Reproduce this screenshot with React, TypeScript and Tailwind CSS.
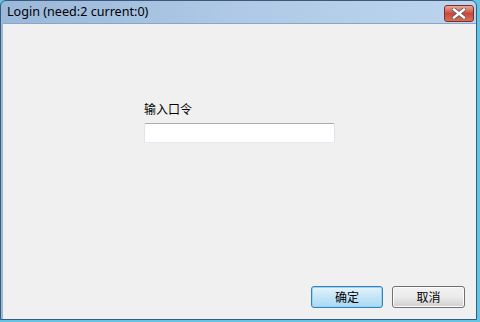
export default function App() {
  return (
    <div className="w-[480px] h-[322px] bg-[#5fc6e6] relative overflow-hidden" style={{ fontFamily: '"Noto Sans", "Noto Sans CJK SC", sans-serif' }}>
      <div className="absolute left-0 top-0 w-[477px] h-[320px] border border-[#3b5a7a] rounded-tl-[6px] rounded-tr-[6px] flex flex-col bg-gradient-to-r from-[#9ab8da] via-[#afc9e6] to-[#bcd4ee]">
        <div className="h-[22px] flex items-center justify-between pl-[6px] pr-[2px] shrink-0">
          <span className="text-[12.6px] text-black leading-none mt-[1px]">Login (need:2 current:0)</span>
          <div className="w-[30px] h-[17px] mt-[3px] rounded-[3px] border border-[#7a3028] bg-gradient-to-b from-[#e7a99a] via-[#c9473b] to-[#d86e55] flex items-center justify-center">
            <svg width="14" height="11" viewBox="0 0 14 11">
              <path d="M2 1.5 L12 9.5 M12 1.5 L2 9.5" stroke="#555" strokeWidth="4" strokeLinecap="square" />
              <path d="M2 1.5 L12 9.5 M12 1.5 L2 9.5" stroke="#fff" strokeWidth="2.4" strokeLinecap="square" />
            </svg>
          </div>
        </div>
        <div className="flex-1 ml-[2px] border-t border-[#8aa6c4] bg-[#f0f0f0] flex flex-col">
          <div className="flex-1 flex flex-col pl-[141px] pt-[77px]">
            <span className="text-[12px] text-black leading-[16px]" style={{ fontFamily: '"Noto Sans CJK SC", sans-serif' }}>输入口令</span>
            <div className="mt-[6px] w-[191px] h-[20px] bg-white rounded-[2px] border border-[#e2e3ea] border-t-[#abadb3] border-b-[#e3e9ef]" />
          </div>
          <div className="flex justify-end gap-[9px] pr-[11px] pb-[11px]">
            <button className="w-[72px] h-[22px] rounded-[3px] border border-[#3c7fb1] bg-gradient-to-b from-[#e5f4fc] via-[#c4e5f6] to-[#a7d9f5] shadow-[inset_0_0_0_1px_#8fd6f8] text-[12px] text-black leading-none" style={{ fontFamily: '"Noto Sans CJK SC", sans-serif' }}>确定</button>
            <button className="w-[73px] h-[22px] rounded-[3px] border border-[#707070] bg-gradient-to-b from-[#f2f2f2] via-[#ebebeb] to-[#cfcfcf] shadow-[inset_0_0_0_1px_#fcfcfc] text-[12px] text-black leading-none" style={{ fontFamily: '"Noto Sans CJK SC", sans-serif' }}>取消</button>
          </div>
        </div>
      </div>
    </div>
  );
}
